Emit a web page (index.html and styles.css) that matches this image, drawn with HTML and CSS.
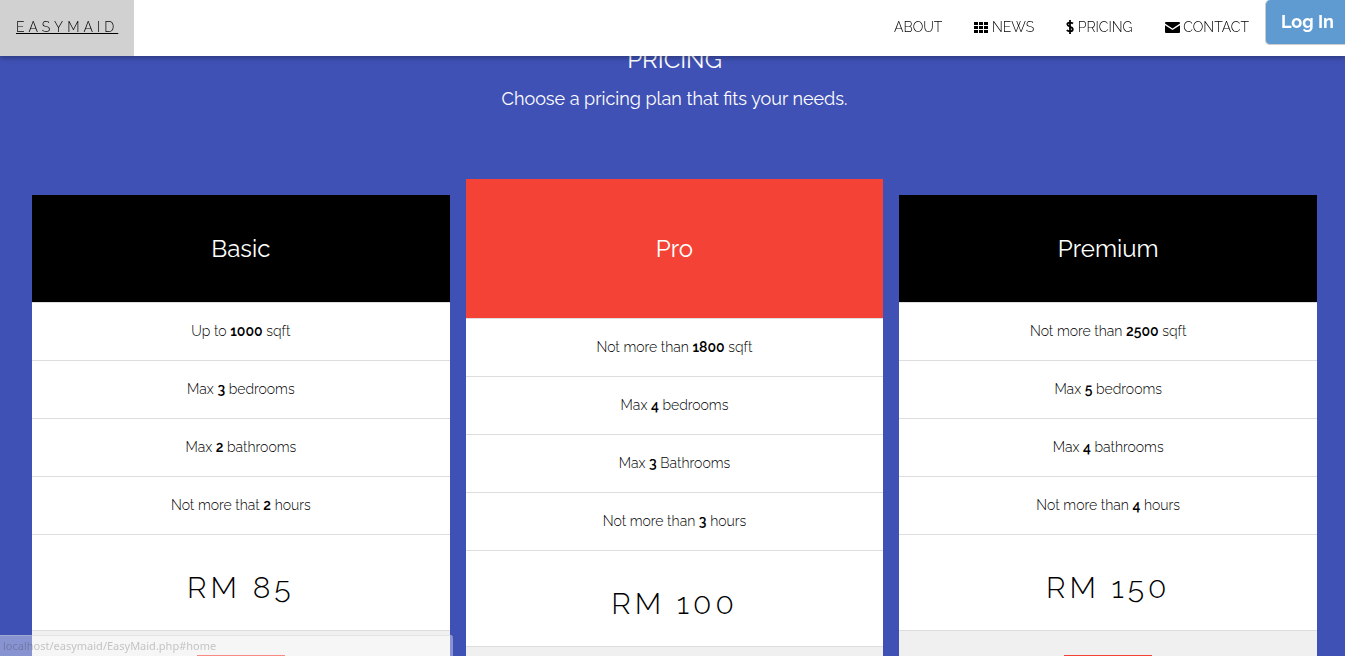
FILE: index.html
```
<!DOCTYPE html>
<html lang="en">
<head>
  <meta charset="UTF-8">
  <meta name="viewport" content="width=device-width, initial-scale=1.0">
  <title>EasyMaid</title>
  <link rel="stylesheet" href="styles.css">
</head>
<body>
  <!-- Navbar -->
  <nav class="navbar">
    <a href="#home" class="brand">EASYMAID</a>
    <div class="nav-links">
      <a href="#about">ABOUT</a>
      <a href="#news">
        <svg class="icon" width="14" height="11" viewBox="0 0 14 11" aria-hidden="true">
          <path d="M0 0h4v3H0zM5 0h4v3H5zM10 0h4v3h-4zM0 4h4v3H0zM5 4h4v3H5zM10 4h4v3h-4zM0 8h4v3H0zM5 8h4v3H5zM10 8h4v3h-4z"/>
        </svg>
        NEWS</a>
      <a href="#pricing">
        <svg class="icon dollar" width="8" height="14" viewBox="0 0 8 14" aria-hidden="true">
          <path d="M4 0v14M7 3.5C5.500 2.300 1.300 1.900 1.300 4.300C1.300 7 6.800 6.400 6.800 9.300C6.800 12 2.500 11.900 .8 10.200" fill="none" stroke="currentColor" stroke-width="1.800"/>
        </svg>
        PRICING</a>
      <a href="#contact">
        <svg class="icon" width="15" height="11" viewBox="0 0 15 11" aria-hidden="true">
          <path d="M1 0h13q1 0 1 1v.6L7.500 6.400 0 1.600V1q0-1 1-1zM0 3.200L7.500 8 15 3.200V10q0 1-1 1H1q-1 0-1-1z"/>
        </svg>
        CONTACT</a>
      <button type="button" class="login">Log In</button>
    </div>
  </nav>

  <!-- Pricing Section -->
  <section class="pricing" id="pricing">
    <h3>PRICING</h3>
    <p class="intro">Choose a pricing plan that fits your needs.</p>

    <div class="plans">
      <ul class="plan">
        <li class="plan-name">Basic</li>
        <li>Up to <b>1000</b> sqft</li>
        <li>Max <b>3</b> bedrooms</li>
        <li>Max <b>2</b> bathrooms</li>
        <li>Not more that <b>2</b> hours</li>
        <li class="price"><h2>RM 85</h2></li>
        <li class="plan-footer"><button type="button" aria-label="Choose Basic"></button></li>
      </ul>

      <ul class="plan featured">
        <li class="plan-name">Pro</li>
        <li>Not more than <b>1800</b> sqft</li>
        <li>Max <b>4</b> bedrooms</li>
        <li>Max <b>3</b> Bathrooms</li>
        <li>Not more than <b>3</b> hours</li>
        <li class="price"><h2>RM 100</h2></li>
        <li class="plan-footer"><button type="button" aria-label="Choose Pro"></button></li>
      </ul>

      <ul class="plan">
        <li class="plan-name">Premium</li>
        <li>Not more than <b>2500</b> sqft</li>
        <li>Max <b>5</b> bedrooms</li>
        <li>Max <b>4</b> bathrooms</li>
        <li>Not more than <b>4</b> hours</li>
        <li class="price"><h2>RM 150</h2></li>
        <li class="plan-footer"><button type="button" aria-label="Choose Premium"></button></li>
      </ul>
    </div>
  </section>

  <div class="status">localhost/easymaid/EasyMaid.php#home</div>
</body>
</html>
```
FILE: styles.css
```
* {
  box-sizing: border-box;
}

body {
  margin: 0;
  font-family: Raleway, Lato, sans-serif;
  font-size: 14px;
  font-weight: 300;
  color: #000;
}

/* Navbar */
.navbar {
  position: fixed;
  top: 0;
  left: 0;
  width: 100%;
  height: 56px;
  z-index: 2;
  display: flex;
  justify-content: space-between;
  background: #fff;
  box-shadow: 0 2px 5px rgba(0, 0, 0, 0.3);
}

.navbar a {
  padding: 16px;
  line-height: 22px;
  color: #000;
  text-decoration: none;
}

.navbar .brand {
  letter-spacing: 4px;
  background: #d1d1d1;
  text-decoration: underline;
}

.nav-links {
  display: flex;
  align-items: flex-start;
}

.icon {
  vertical-align: -1px;
  fill: currentColor;
}

.icon.dollar {
  vertical-align: -2px;
}

.login {
  height: 45px;
  padding: 0 11px 1px 15px;
  border: 1px solid #ccc;
  border-width: 0 0 1px 1px;
  border-radius: 5px 0 0 5px;
  background: #5f9bd1;
  color: #fff;
  font-family: inherit;
  font-size: 18px;
  font-weight: 700;
  cursor: pointer;
}

/* Pricing Section */
.pricing {
  height: 100vh;
  overflow: hidden;
  padding: 42px 28px 0 32px;
  background: #3f51b5;
  color: #fff;
  text-align: center;
}

.pricing h3 {
  margin: 0;
  font-size: 24px;
  font-weight: 400;
  line-height: 36px;
}

.intro {
  margin: 7px 0 66px;
  font-size: 18px;
  font-weight: 400;
  line-height: 28px;
}

.plans {
  display: grid;
  grid-template-columns: repeat(3, 1fr);
  gap: 16px;
  align-items: start;
}

.plan {
  margin: 16px 0 0;
  padding: 0;
  list-style: none;
  background: #fff;
  color: #000;
}

.plan li {
  padding: 16px;
  line-height: 25px;
  border-bottom: 1px solid #ddd;
}

.plan .plan-name {
  padding: 36px 16px;
  background: #000;
  color: #fff;
  font-size: 24px;
  font-weight: 400;
  line-height: 35px;
}

.plan.featured {
  margin-top: 0;
}

.featured .plan-name {
  padding: 52px 16px;
  background: #f44336;
}

.plan b {
  font-weight: 600;
}

.plan .price {
  padding: 30px 16px 20px;
}

.price h2 {
  margin: 0;
  font-size: 30px;
  font-weight: 300;
  letter-spacing: 4px;
  line-height: 45px;
}

.plan .plan-footer {
  padding: 24px;
  background: #f0f0f0;
}

.plan-footer button {
  width: 88px;
  height: 40px;
  border: 0;
  background: #f44336;
  vertical-align: top;
}

/* Link address shown at the bottom of the window */
.status {
  position: fixed;
  left: 0;
  bottom: 0;
  width: 453px;
  height: 21px;
  padding-left: 3px;
  z-index: 3;
  border-top: 1px solid rgba(200, 200, 200, 0.4);
  border-top-right-radius: 3px;
  background: rgba(255, 255, 255, 0.38);
  color: rgba(60, 60, 60, 0.28);
  font-family: "Noto Sans", sans-serif;
  font-size: 11px;
  font-weight: 400;
  line-height: 20px;
}
```
